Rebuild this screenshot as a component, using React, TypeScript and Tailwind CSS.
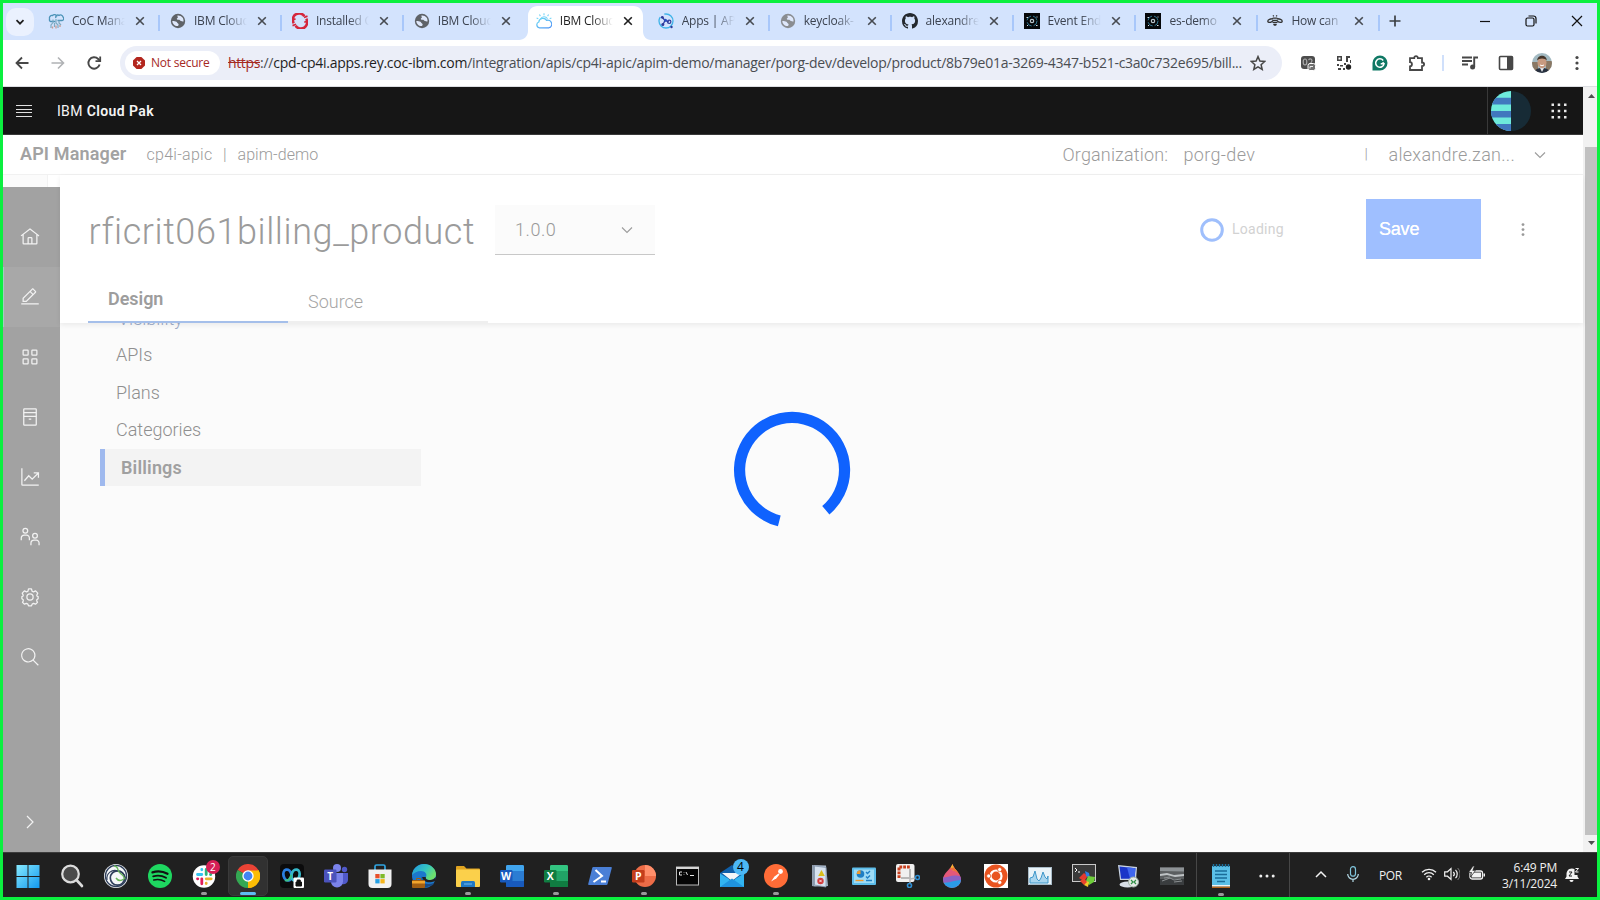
import type { ReactNode } from 'react';

type IconProps = { className?: string; box?: string; children: ReactNode };

function Svg({ className = 'size-4', box = '0 0 16 16', children }: IconProps) {
  return (
    <svg viewBox={box} className={`shrink-0 ${className}`} fill="none">
      {children}
    </svg>
  );
}

/* ---------- favicons ---------- */

function Globe({ color = '#5f6368' }: { color?: string }) {
  return (
    <Svg>
      <circle cx="8" cy="8" r="7.2" fill={color} />
      <path d="M2.300 8c1.800 0 3.200.2 4.200.8.800.5.6 1.300 1.500 1.600 1 .3.700 1.500 0 2.600C5 13.400 2.400 11 2.300 8Z" fill="#dfe8fb" />
      <path d="M7.200 2.700c2-.5 4 .3 5.300 1.900.9 1 .9 2.300 1.100 3.600-1 .6-1.700-.2-2.600-.2-.9 0-1-.9-1.800-1.200-.9-.4-2.200.1-2.400-.9-.1-.8 1.200-.9 1.100-1.700Z" fill="#dfe8fb" />
    </Svg>
  );
}

const favicons: Record<string, ReactNode> = {
  coc: (
    <Svg>
      <path d="M1.500 5.500a2.500 2.500 0 0 1 3-3 2.700 2.700 0 0 1 4.500 1M8 5a2 2 0 0 1 3-2.500 2.500 2.500 0 0 1 4 1.500 2 2 0 0 1-1 3.500H9.500M2 5.500a1.800 1.800 0 0 0 .5 3h5" stroke="#4c93b8" strokeWidth="1.300" />
      <path d="M5 6.500v3l-2 2.500v3M8 6v4l2 2v3M11 7.500v2.500l2 2M6.500 10v4" stroke="#7fabc2" strokeWidth="1.200" />
      <path d="M4.500 13.500v2M8 12.500v3M12 12v2" stroke="#c99a94" strokeWidth="1.300" />
    </Svg>
  ),
  globe: <Globe />,
  globeLight: <Globe color="#8a8d91" />,
  openshift: (
    <Svg>
      <path d="M1.800 10.200A6.300 6.300 0 0 1 12.400 3.300M14.200 5.800A6.300 6.300 0 0 1 3.600 12.700" stroke="#d5263c" strokeWidth="2.600" />
      <path d="m.3 7 3.200-1.100M12 4.500l3.500-1.400M.5 12.600l3.600-1.300M12.300 9.300l3.200-1.200" stroke="#d5263c" strokeWidth="1.700" />
    </Svg>
  ),
  cloud: (
    <Svg>
      <defs>
        <linearGradient id="cl" x1="0" y1="0" x2="1" y2="1">
          <stop stopColor="#6adcf4" />
          <stop offset="1" stopColor="#4b8ff5" />
        </linearGradient>
      </defs>
      <path d="M3.500 14.800a3 3 0 0 1-.7-5.800 4.200 4.200 0 0 1 7.800-1.600 3.800 3.800 0 0 1 2.400 7.400Z" stroke="url(#cl)" strokeWidth="1.200" />
      <path d="M8 .3v1.900M3.400 1.500l1 1.600M12.600 1.500l-1 1.600M.6 5l1.700.8M15.400 5l-1.700.8M4.500 6a4 4 0 0 1 7-.3" stroke="#78d5f7" strokeWidth="1.100" />
    </Svg>
  ),
  apic: (
    <Svg>
      <circle cx="8" cy="8" r="7" stroke="#3fb3e8" strokeWidth="1.300" strokeDasharray="26 5" />
      <path d="m4.500 4.500 2.500 3-2 4M7 7.500l4 1.500" stroke="#2d3a9a" strokeWidth="1.300" />
      <circle cx="4.300" cy="4.300" r="1.400" fill="#2d3a9a" />
      <circle cx="4.800" cy="11.400" r="1.500" fill="#2d3a9a" />
      <circle cx="7.500" cy="7.300" r="1.500" fill="#2a4fc0" />
      <circle cx="11.200" cy="8.800" r="1.700" stroke="#2d3a9a" strokeWidth="1.200" />
      <circle cx="13.500" cy="14" r="1.200" fill="#2d3a9a" />
    </Svg>
  ),
  github: (
    <Svg>
      <path fill="#24292f" d="M8 0c4.420 0 8 3.580 8 8a8.013 8.013 0 0 1-5.450 7.590c-.4.080-.55-.17-.55-.38 0-.27.010-1.130.010-2.200 0-.75-.25-1.230-.54-1.480 1.780-.2 3.650-.88 3.650-3.950 0-.88-.31-1.590-.82-2.150.080-.2.360-1.020-.080-2.120 0 0-.67-.22-2.200.82-.64-.18-1.320-.27-2-.27-.68 0-1.360.090-2 .27-1.530-1.030-2.200-.82-2.200-.82-.44 1.100-.16 1.920-.080 2.120-.51.56-.82 1.280-.82 2.150 0 3.060 1.860 3.750 3.640 3.950-.23.2-.44.550-.51 1.070-.46.210-1.610.550-2.330-.66-.15-.24-.6-.83-1.230-.82-.67.010-.27.380.010.530.340.190.730.900.820 1.130.160.450.680 1.310 2.690.940 0 .670.010 1.300.010 1.490 0 .210-.150.450-.550.380A7.995 7.995 0 0 1 0 8c0-4.420 3.580-8 8-8Z" />
    </Svg>
  ),
  events: (
    <Svg>
      <rect width="16" height="16" fill="#05070a" />
      <circle cx="8" cy="8" r="5" stroke="#2f7590" strokeWidth="1" strokeDasharray="6 2" />
      <circle cx="8" cy="8" r="1.700" stroke="#b8c4cc" strokeWidth="1.200" />
      <path d="M2.500 4.500h1.500M12.500 4h1M3 12.500h1M12 12.500h1.500" stroke="#d5dde2" />
    </Svg>
  ),
  bee: (
    <Svg>
      <path d="M6 5.800C3.500 5.600.8 6.500.8 8.200c0 1.800 3.600 1.600 5.200-.6M10 5.800c2.500-.2 5.200.7 5.200 2.400 0 1.800-3.600 1.600-5.200-.6" stroke="#333" strokeWidth="1.300" />
      <path d="M5.700 5.200h4.600M5.500 7.300h5M5.500 9.400h5M6.300 11.500h3.400M8 11v2M6.800 3.400 6 2.400M9.200 3.400l.8-1" stroke="#333" strokeWidth="1.300" />
    </Svg>
  ),
};

/* ---------- browser chrome ---------- */

const tabs = [
  { icon: 'coc', title: 'CoC Mana' },
  { icon: 'globe', title: 'IBM Cloud' },
  { icon: 'openshift', title: 'Installed C' },
  { icon: 'globe', title: 'IBM Cloud' },
  { icon: 'cloud', title: 'IBM Cloud', active: true },
  { icon: 'apic', title: 'Apps | API' },
  { icon: 'globeLight', title: 'keycloak-' },
  { icon: 'github', title: 'alexandre' },
  { icon: 'events', title: 'Event End' },
  { icon: 'events', title: 'es-demo' },
  { icon: 'bee', title: 'How can' },
];

function Cross({ color = '#3c4043' }: { color?: string }) {
  return (
    <Svg className="size-2.5" box="0 0 10 10">
      <path d="m1.200 1.200 7.600 7.600M8.800 1.200 1.200 8.800" stroke={color} strokeWidth="1.600" />
    </Svg>
  );
}

function TabStrip() {
  return (
    <div className="flex h-[37px] shrink-0 bg-[#d3e3fd] font-['Open_Sans',sans-serif]">
      <div className="flex w-[35.500px] shrink-0 items-center pl-[3px]">
        <div className="flex size-7 items-center justify-center rounded-[10px] bg-[#eaf1fe]">
          <Svg className="size-2.5" box="0 0 10 10">
            <path d="M1.500 3.200 5 6.700l3.500-3.500" stroke="#1f1f1f" strokeWidth="1.700" />
          </Svg>
        </div>
      </div>
      {tabs.map((t, i) => (
        <div key={i} className={`relative flex w-[121.950px] shrink-0 pt-[3px] ${t.active ? 'z-10' : ''}`}>
          {t.active && (
            <svg viewBox="0 0 132 34" className="absolute top-[3px] -left-[7px] h-[34px] w-[132px]">
              <path d="M0 34c5 0 9-4 9-9V10C9 4 13 0 19 0h95c6 0 10 4 10 10v15c0 5 3 9 8 9Z" fill="#fff" />
            </svg>
          )}
          <div className="relative flex w-full items-center pb-[5px] pl-[9.500px]">
            {favicons[t.icon]}
            <span
              className={`ml-2 w-[54px] text-[12px] leading-5 tracking-[-0.2px] whitespace-nowrap [mask-image:linear-gradient(90deg,#000_60%,transparent_98%)] ${t.active ? 'text-[#1f1f1f]' : 'text-[#3c4350]'}`}
            >
              {t.title}
            </span>
            <span className="ml-[9px] flex">
              <Cross color={t.active ? '#1f1f1f' : '#474b52'} />
            </span>
          </div>
          {i !== 3 && !t.active && <div className="mt-[9px] h-4 w-0.5 shrink-0 bg-[#a8c7fa]" />}
          {(i === 3 || t.active) && <div className="w-0.5 shrink-0" />}
        </div>
      ))}
      <div className="flex flex-1 items-center pb-0.5 pl-[9px]">
        <Svg className="size-3" box="0 0 12 12">
          <path d="M6 .5v11M.5 6h11" stroke="#3c4043" strokeWidth="1.700" />
        </Svg>
        <div className="ml-auto flex items-center gap-[34px] pr-[14px]">
          <Svg className="size-3" box="0 0 12 12">
            <path d="M1 6.500h10" stroke="#111" strokeWidth="1.200" />
          </Svg>
          <Svg className="size-3" box="0 0 12 12">
            <rect x="1" y="3" width="8" height="8" rx="1.500" stroke="#111" strokeWidth="1.200" />
            <path d="M3.500 1h5A2.500 2.500 0 0 1 11 3.500v5" stroke="#111" strokeWidth="1.200" />
          </Svg>
          <Svg className="size-3" box="0 0 12 12">
            <path d="m1 1 10 10M11 1 1 11" stroke="#111" strokeWidth="1.200" />
          </Svg>
        </div>
      </div>
    </div>
  );
}

function Toolbar() {
  return (
    <div className="flex h-[47px] shrink-0 items-center border-b border-[#dcdee2] bg-white pb-px font-['Open_Sans',sans-serif]">
      <div className="flex w-[117px] shrink-0 items-center gap-5 pl-[11px]">
        <Svg>
          <path d="M14.500 8H2.500M8 2.500 2.500 8 8 13.500" stroke="#474747" strokeWidth="1.800" />
        </Svg>
        <Svg>
          <path d="M1.500 8h12M8 2.500 13.500 8 8 13.500" stroke="#b0b2b5" strokeWidth="1.600" />
        </Svg>
        <Svg>
          <path d="M13.600 9.500A5.700 5.700 0 1 1 12.200 4L14 5.800" stroke="#474747" strokeWidth="1.900" />
          <path d="M14.200 1.500v4.700H9.500" stroke="#474747" strokeWidth="1.800" />
        </Svg>
      </div>
      <div className="flex h-[34px] w-[1162px] shrink-0 items-center rounded-full bg-[#ebeef8] pl-[5px]">
        <div className="flex h-6 w-[95px] shrink-0 items-center gap-[6px] rounded-full bg-white pl-[8px]">
          <Svg className="size-3" box="0 0 12 12">
            <path d="M3.600 0h4.800L12 3.600v4.800L8.400 12H3.600L0 8.400V3.600Z" fill="#b3261e" />
            <path d="m4 4 4 4M8 4 4 8" stroke="#fff" strokeWidth="1.300" />
          </Svg>
          <span className="text-[12px] leading-5 tracking-[-0.230px] whitespace-nowrap text-[#a5291f]">Not secure</span>
        </div>
        <div className="ml-2 flex w-[1018px] shrink-0 text-[14px] leading-6 whitespace-nowrap text-[#4a4d52]">
          <span className="tracking-[-0.360px] text-[#a5291f] line-through">https</span>
          <span className="tracking-[-0.260px]">
            ://<span className="text-[#1f1f1f]">cpd-cp4i.apps.rey.coc-ibm.com</span>
            /integration/apis/cp4i-apic/apim-demo/manager/porg-dev/develop/product/8b79e01a-3269-4347-b521-c3a0c732e695/bill...
          </span>
        </div>
        <Svg className="ml-[4px] size-4">
          <path d="m8 1.600 1.900 4.500 4.800.4-3.600 3.200 1.100 4.700L8 11.900l-4.200 2.500 1.100-4.700L1.300 6.500l4.800-.4Z" stroke="#474747" strokeWidth="1.500" />
        </Svg>
      </div>
      <div className="flex flex-1 items-center pl-[18px]">
        <Svg>
          <rect x="1" y="1" width="14" height="13" rx="3" fill="#4d4d4d" />
          <ellipse cx="5" cy="7" rx="1.800" ry="3" stroke="#a8a8a8" strokeWidth="1.200" />
          <path d="M8.500 5c2-2.200 4.500-.2 3 2L10 9" stroke="#a8a8a8" strokeWidth="1.200" />
          <rect x="8" y="8.500" width="7.500" height="7" rx="2" fill="#6f6f6f" stroke="#fff" />
          <path d="M10 13.500v-2h3" stroke="#eee" />
        </Svg>
        <Svg className="ml-5 size-4">
          <path d="M1 1h5v5H1zM10 1h4v2h-2v4h-2zM1 9h2v2H1zM4 10h3v1.500H4zM2 13h3v2H2zM8 8h2v2H8zM14 5h1v3h-1zM7 13h2v2H7z" fill="#444" />
          <path d="M2.500 2.500h2v2h-2z" fill="#fff" />
          <circle cx="12.500" cy="12" r="2.700" fill="#222" />
        </Svg>
        <Svg className="ml-5 size-4">
          <path d="M.5 8A7.500 7.500 0 1 1 8 15.500H.5Z" fill="#0f7864" />
          <path d="M11.200 5.500A4.200 4.200 0 1 0 12 8.800H8.700M12 8.800l-1.400-1.500" stroke="#fff" strokeWidth="1.500" />
        </Svg>
        <Svg className="ml-5 size-[18px]" box="0 0 18 18">
          <path d="M2 4.200h4.200C6 1.300 10 1.300 9.900 4.200H14v4.300c2.800 0 2.800 3.500 0 3.600V16H2v-3.700c2.600-.2 2.600-4 0-4.100Z" stroke="#474747" strokeWidth="1.800" />
        </Svg>
        <div className="ml-4 h-4 w-0.5 bg-[#d0e0fb]" />
        <Svg className="ml-[17px] size-[18px]" box="0 0 18 18">
          <path d="M1 3.500h10M1 7h10M1 10.500h6" stroke="#474747" strokeWidth="1.900" />
          <path d="M13.200 13V3.500H17" stroke="#474747" strokeWidth="1.900" />
          <circle cx="11.600" cy="13" r="2.500" fill="#474747" />
        </Svg>
        <Svg className="ml-[19px] size-4">
          <rect x="1.500" y="1.500" width="13" height="13" rx="1" stroke="#474747" strokeWidth="1.600" />
          <path d="M9 1.500h5.500v13H9z" fill="#474747" />
        </Svg>
        <Svg className="ml-[18px] size-5" box="0 0 20 20">
          <defs>
            <clipPath id="face">
              <circle cx="10" cy="10" r="10" />
            </clipPath>
          </defs>
          <g clipPath="url(#face)">
            <rect width="20" height="20" fill="#a3bac2" />
            <path d="M0 9h6v11H0zM14 8h6v12h-6z" fill="#8a7864" />
            <path d="M2 20c1-4 4-5 8-5s7 1 8 5Z" fill="#28303f" />
            <path d="m7.500 14 2.500 5 2.500-5Z" fill="#e4e6ea" />
            <ellipse cx="10" cy="9.500" rx="4.500" ry="5.800" fill="#c89a80" />
            <path d="M5.200 7.500c-.2-6.500 9.800-6.500 9.600 0-1.500-2.800-8-2.800-9.600 0Z" fill="#44352a" />
            <path d="M8 12q2 1.500 4 0" stroke="#fff" />
          </g>
        </Svg>
        <Svg className="ml-[17px] size-4">
          <circle cx="8" cy="2.500" r="1.600" fill="#474747" />
          <circle cx="8" cy="8" r="1.600" fill="#474747" />
          <circle cx="8" cy="13.500" r="1.600" fill="#474747" />
        </Svg>
      </div>
    </div>
  );
}

/* ---------- application ---------- */

function AppHeader() {
  return (
    <header className="flex h-12 shrink-0 items-center border-b border-[#393939] bg-[#161616] pl-[13px] font-[Roboto,sans-serif] text-[14px] text-[#f4f4f4]">
      <Svg className="size-4">
        <path d="M0 2.500h16M0 6.500h16M0 9.500h16M0 13.500h16" stroke="#e0e0e0" strokeWidth="1.200" />
      </Svg>
      <span className="mt-0.5 ml-[25px] tracking-[0.300px]">IBM</span>
      <span className="mt-0.5 ml-[4px] font-semibold tracking-[0.400px]">Cloud Pak</span>
      <div className="ml-auto h-full w-px bg-[#393939]" />
      <Svg className="ml-[3px] size-10" box="0 0 40 40">
        <defs>
          <clipPath id="av">
            <circle cx="20" cy="20" r="20" />
          </clipPath>
        </defs>
        <g clipPath="url(#av)">
          <rect width="40" height="40" fill="#172b36" />
          <rect width="20" height="40" fill="#6eeadb" />
          <path d="M0 6.800h20v6.600H0zM0 20h20v6.500H0zM0 33h20v7H0z" fill="#4178be" />
        </g>
      </Svg>
      <Svg className="mr-4 ml-[20px] size-4">
        <path d="M.5.5h2.500v2.500H.5zM6.700.5h2.500v2.500H6.700zM13 .5h2.500v2.500H13zM.5 6.700h2.500v2.500H.5zM6.700 6.700h2.500v2.500H6.700zM13 6.700h2.500v2.500H13zM.5 13h2.500v2.500H.5zM6.700 13h2.500v2.500H6.700zM13 13h2.500v2.500H13z" fill="#e8e8e8" />
      </Svg>
    </header>
  );
}

function Chevron() {
  return (
    <Svg className="size-3" box="0 0 12 12">
      <path d="M1 3.500 6 8.500l5-5" stroke="#9c9c9c" strokeWidth="1.100" />
    </Svg>
  );
}

function SubHeader() {
  return (
    <div className="flex h-10 shrink-0 items-center border-b border-[#f1f1f1] bg-white pl-[17px] text-[18px] font-light whitespace-nowrap text-[#9b9b9b]">
      <span className="w-[126.500px] pb-0.5 font-semibold tracking-[0.150px] text-[#a2a2a2]">API Manager</span>
      <span className="w-[76.500px] text-[16px] tracking-[0.280px]">cp4i-apic</span>
      <span className="w-[14.500px] text-[16px]">|</span>
      <span className="text-[16px] tracking-[0.080px]">apim-demo</span>
      <span className="ml-auto w-[121px] tracking-[0.150px]">Organization:</span>
      <span className="w-[181px] tracking-[0.350px]">porg-dev</span>
      <span className="w-[24px] text-[15px]">|</span>
      <span className="w-[145.500px] tracking-[0.280px]">alexandre.zan...</span>
      <span className="flex w-[49px]">
        <Chevron />
      </span>
    </div>
  );
}

const carbon: Record<string, ReactNode> = {
  home: <path d="M16.612 2.214a1.010 1.010 0 0 0-1.243 0L1 13.419l1.243 1.572L4 13.621V26a2.004 2.004 0 0 0 2 2h20a2.004 2.004 0 0 0 2-2V13.630L29.757 15 31 13.428ZM18 26h-4v-8h4Zm2 0v-8a2.002 2.002 0 0 0-2-2h-4a2.002 2.002 0 0 0-2 2v8H6V12.062l10-7.790 10 7.800V26Z" />,
  edit: <path d="M2 26h28v2H2zM25.400 9c.8-.8.8-2 0-2.800l-3.600-3.600c-.8-.8-2-.8-2.800 0l-15 15V24h6.400ZM20.400 4 24 7.600l-3 3L17.400 7ZM6 22v-3.600l10-10 3.600 3.600-10 10Z" />,
  apps: <path d="M12 4H6a2 2 0 0 0-2 2v6a2 2 0 0 0 2 2h6a2 2 0 0 0 2-2V6a2 2 0 0 0-2-2Zm0 8H6V6h6ZM26 4h-6a2 2 0 0 0-2 2v6a2 2 0 0 0 2 2h6a2 2 0 0 0 2-2V6a2 2 0 0 0-2-2Zm0 8h-6V6h6ZM12 18H6a2 2 0 0 0-2 2v6a2 2 0 0 0 2 2h6a2 2 0 0 0 2-2v-6a2 2 0 0 0-2-2Zm0 8H6v-6h6ZM26 18h-6a2 2 0 0 0-2 2v6a2 2 0 0 0 2 2h6a2 2 0 0 0 2-2v-6a2 2 0 0 0-2-2Zm0 8h-6v-6h6Z" />,
  catalog: (
    <g fill="none" stroke="currentColor" strokeWidth="2">
      <rect x="6" y="3" width="20" height="26" rx="1" />
      <path d="M6 9h20M6 15h20M14 19.500h4" />
    </g>
  ),
  chart: (
    <g fill="none" stroke="currentColor" strokeWidth="2">
      <path d="M3 2v26a1 1 0 0 0 1 1h26" />
      <path d="m7 22 7-8 5.500 5.500L29 10M22 9.500h7.500V17" />
    </g>
  ),
  users: (
    <g fill="none" stroke="currentColor" strokeWidth="2">
      <circle cx="8.500" cy="6" r="3.800" />
      <path d="M2 21v-3a5 5 0 0 1 5-5h3.500a4.500 4.500 0 0 1 4.500 5v3" />
      <circle cx="24" cy="14" r="3.800" />
      <path d="M17.500 29v-3a5 5 0 0 1 5-5H26a4.500 4.500 0 0 1 4.500 5v3" />
    </g>
  ),
  settings: (
    <g fill="none" stroke="currentColor" strokeWidth="2">
      <circle cx="16" cy="16" r="5" />
      <path
        d="M13.600 3h4.800l.8 3.600 2.400 1.300 3.400-1.600 3.400 3.500-1.600 3.400.6 1.600 1.600.6v3.400l-2.200 1.500v2l1.200 2.300-3.200 2.900-3-1.300-2.400 1.200-1 2.600h-4.800l-1-2.600-2.400-1.200-3 1.300L4 24.600l1.200-2.300v-2L3 18.800v-3.400l1.600-.6.6-1.600-1.600-3.400L7 6.300l3.400 1.600 2.400-1.300Z"
        strokeLinejoin="round"
      />
    </g>
  ),
  search: <path d="m30 28.590-7.900-7.900a11.500 11.500 0 1 0-1.400 1.400l7.900 7.900ZM3.500 13.200A9.700 9.700 0 1 1 13.200 23 9.700 9.700 0 0 1 3.500 13.200Z" />,
};

const navItems = ['home', 'edit', 'apps', 'catalog', 'chart', 'users', 'settings', 'search'];

function SideNav() {
  return (
    <div className="flex w-[57px] shrink-0 flex-col bg-white">
      <div className="h-3 w-[45px] shrink-0 border-r border-[#f2f2f2] bg-[#fbfbfb]" />
      <nav className="flex flex-1 flex-col bg-[#a2a2a2] pt-5 text-[#f2f2f2]">
        {navItems.map((n) => (
          <div
            key={n}
            className={`flex h-[60px] shrink-0 items-center justify-center border-l pr-[4px] ${n === 'edit' ? 'border-[#9fd0c0] bg-[#a8a8a8]' : 'border-transparent'}`}
          >
            <svg viewBox="0 0 32 32" className="size-5" fill="currentColor">
              {carbon[n]}
            </svg>
          </div>
        ))}
        <div className="mt-auto flex h-[60px] items-center justify-center pr-[3px]">
          <Svg className="size-3.5" box="0 0 14 14">
            <path d="m4 1 6 6-6 6" stroke="#f2f2f2" strokeWidth="1.200" />
          </Svg>
        </div>
      </nav>
    </div>
  );
}

const sections = ['APIs', 'Plans', 'Categories'];

function Product() {
  return (
    <main className="flex min-w-0 flex-1 flex-col bg-[#fbfbfb]">
      <div className="z-10 flex h-[148px] shrink-0 flex-col bg-white shadow-[0_2px_5px_rgba(0,0,0,0.07)]">
        <div className="flex h-[109px] shrink-0 items-center pl-[28.500px]">
          <h1 className="mt-1 w-[406.500px] text-[36px] leading-[48px] font-light tracking-[0.580px] whitespace-nowrap text-[#9b9b9b]">
            rficrit061billing_product
          </h1>
          <div className="mt-px flex h-[50px] w-40 items-center justify-between border-b border-[#c8c8c8] bg-[#fbfbfb] pr-[22px] pl-5">
            <span className="text-[18px] font-light tracking-[0.550px] text-[#999]">1.0.0</span>
            <Chevron />
          </div>
          <div className="ml-auto flex w-[166px] items-center gap-2 pr-1">
            <Svg className="size-6" box="0 0 24 24">
              <circle cx="12" cy="12" r="10.300" stroke="#9fbffc" strokeWidth="3" />
            </Svg>
            <span className="text-[14px] tracking-[0.250px] text-[#d2d2d2]">Loading</span>
          </div>
          <button className="-mt-px flex h-[60px] w-[115px] items-center bg-[#9fbfff] pl-[13px] font-['Liberation_Sans',sans-serif] text-[18px] tracking-[-0.200px] text-white [text-shadow:0_0_0.5px_#fff]">
            Save
          </button>
          <Svg className="mr-[52px] ml-[34px] size-4">
            <circle cx="8" cy="2.600" r="1.400" fill="#999" />
            <circle cx="8" cy="7.600" r="1.400" fill="#999" />
            <circle cx="8" cy="12.600" r="1.400" fill="#999" />
          </Svg>
        </div>
        <div className="flex text-[18px]">
          <div className="ml-[28px] flex h-[39px] w-[200px] items-center border-b-2 border-[#a5bfea] pb-[8px] pl-5 font-semibold tracking-[-0.050px] text-[#9d9d9d]">
            Design
          </div>
          <div className="flex h-[39px] w-[200px] items-center border-b-2 border-[#efefef] pb-[2px] pl-5 font-light text-[#a5a5a5]">Source</div>
        </div>
      </div>
      <div className="relative flex flex-1">
        <div className="w-[361px] pl-10 text-[18px] font-light">
          <div className="h-[13px] overflow-hidden pl-[18px] leading-[18px] text-[#9dabc8]">
            <div className="-mt-[13px]">Visibility</div>
          </div>
          {sections.map((s) => (
            <div key={s} className="flex h-[37.500px] items-center pl-4 text-[#8f8f8f]">
              {s}
            </div>
          ))}
          <div className="flex h-[37px] items-center border-l-[5px] border-[#9fb9ee] bg-[#f3f3f3] pl-4 font-semibold tracking-[0.150px] text-[#a0a0a0]">
            Billings
          </div>
        </div>
        <svg viewBox="0 0 120 120" className="absolute top-[86.500px] left-[672px] size-[120px]" fill="none">
          <path d="M93.800 100.200A52.500 52.500 0 1 0 47.300 110.900" stroke="#0f62fe" strokeWidth="11.200" />
        </svg>
      </div>
    </main>
  );
}

function Scrollbar() {
  return (
    <div className="flex w-[14px] shrink-0 flex-col items-center bg-[#f1f1f1] pl-0.5">
      <div className="flex h-[60px] w-full items-start justify-center pt-[7px]">
        <Svg className="h-1 w-[7px]" box="0 0 7 4">
          <path d="M0 4 3.500 0 7 4Z" fill="#505050" />
        </Svg>
      </div>
      <div className="w-full flex-1 bg-[#c1c1c1]" />
      <div className="flex h-[17px] w-full items-end justify-center pb-[7px]">
        <Svg className="h-1 w-[7px]" box="0 0 7 4">
          <path d="M0 0 3.500 4 7 0Z" fill="#505050" />
        </Svg>
      </div>
    </div>
  );
}

/* ---------- taskbar ---------- */

function OfficeIcon({ letter, dark, mid, light, round }: { letter: string; dark: string; mid: string; light: string; round?: boolean }) {
  return (
    <Svg className="size-6" box="0 0 24 24">
      {round ? (
        <>
          <circle cx="13" cy="12" r="11" fill={mid} />
          <path d="M13 1a11 11 0 0 1 11 11H13Z" fill={light} />
        </>
      ) : (
        <>
          <rect x="6" y="1" width="18" height="22" rx="1.500" fill={mid} />
          <path d="M6 2.500A1.500 1.500 0 0 1 7.500 1h15A1.500 1.500 0 0 1 24 2.500V7H6Z" fill={light} />
          <path d="M6 17h18v4.500a1.500 1.500 0 0 1-1.500 1.500h-15A1.500 1.500 0 0 1 6 21.500Z" fill={dark} />
        </>
      )}
      <rect y="6" width="12.500" height="12.500" rx="1.200" fill={dark} />
      <text x="6.200" y="16" textAnchor="middle" fontFamily="Open Sans" fontWeight="700" fontSize="10.500" fill="#fff">
        {letter}
      </text>
    </Svg>
  );
}

const big = { className: 'size-6', box: '0 0 24 24' };

const apps: { id: string; icon: ReactNode; dot?: boolean; active?: boolean; badge?: string; badgeBlue?: boolean }[] = [
  {
    id: 'start',
    icon: (
      <Svg {...big}>
        <defs>
          <linearGradient id="win" x1="0" y1="0" x2="1" y2="1">
            <stop stopColor="#86eaff" />
            <stop offset="1" stopColor="#1298ee" />
          </linearGradient>
        </defs>
        <path d="M.5 1h11v11H.5zM12.500 1h11v11h-11zM.5 13h11v11H.5zM12.500 13h11v11h-11z" fill="url(#win)" />
      </Svg>
    ),
  },
  {
    id: 'search',
    icon: (
      <Svg {...big}>
        <circle cx="10.500" cy="10" r="8.300" fill="#4a4a4a" stroke="#dcdcdc" strokeWidth="2.200" />
        <path d="m16.500 16 5.500 6" stroke="#dcdcdc" strokeWidth="2.600" strokeLinecap="round" />
      </Svg>
    ),
  },
  {
    id: 'eclipse',
    icon: (
      <Svg {...big}>
        <circle cx="12" cy="12" r="12" fill="#f5f7f8" />
        <circle cx="12" cy="12" r="10.600" stroke="#31405c" strokeWidth="1.300" />
        <circle cx="13.500" cy="14" r="7.200" stroke="#31405c" strokeWidth="1.700" />
        <path d="M3 16C2 9 8 5 14 7s8 6 7 10" stroke="#31405c" strokeWidth="1.200" />
        <path d="M10 2c5 0 3 5 6 7s4 3 5 6M12 14c2 3 5 3 8 1" stroke="#68b55a" strokeWidth="1.400" />
      </Svg>
    ),
  },
  {
    id: 'spotify',
    icon: (
      <Svg {...big}>
        <circle cx="12" cy="12" r="12" fill="#1ed760" />
        <path d="M4.500 8.300c5-1.500 10.500-1 15 1.500" stroke="#121212" strokeWidth="2.300" strokeLinecap="round" />
        <path d="M5.200 12.300c4.300-1.200 9-.7 12.800 1.500" stroke="#121212" strokeWidth="1.900" strokeLinecap="round" />
        <path d="M5.800 16c3.600-.9 7.500-.5 10.800 1.400" stroke="#121212" strokeWidth="1.600" strokeLinecap="round" />
      </Svg>
    ),
  },
  {
    id: 'slack',
    dot: true,
    badge: '2',
    icon: (
      <Svg {...big}>
        <circle cx="12" cy="12.500" r="11.200" fill="#fff" />
        <g strokeLinecap="round" strokeWidth="2.800">
          <path d="M9.800 10.500H5.500M9.800 5.500v.3" stroke="#36c5f0" />
          <path d="M14.200 5.500v5M18.500 10.500h.3" stroke="#2eb67d" />
          <path d="M14.200 14.800h5M14.200 19.500v-.3" stroke="#ecb22e" />
          <path d="M9.800 14.800v5M5.500 14.800h.3" stroke="#e01e5a" />
        </g>
      </Svg>
    ),
  },
  {
    id: 'chrome',
    active: true,
    icon: (
      <Svg {...big}>
        <path d="M12 12 1.600 6A12 12 0 0 1 22.400 6Z" fill="#ea4335" />
        <path d="M12 12 22.400 6A12 12 0 0 1 12 24Z" fill="#fbbc05" />
        <path d="M12 12v12A12 12 0 0 1 1.600 6Z" fill="#34a853" />
        <path d="M12 6.500h10.700A12 12 0 0 1 12 24l5-9Z" fill="#fbbc05" />
        <circle cx="12" cy="12" r="5.700" fill="#fff" />
        <circle cx="12" cy="12" r="4.400" fill="#4285f4" />
      </Svg>
    ),
  },
  {
    id: 'webex',
    icon: (
      <Svg {...big}>
        <rect width="24" height="24" rx="4" fill="#0b0b0c" />
        <ellipse cx="7.500" cy="11" rx="4" ry="5.500" stroke="#2a7fe0" strokeWidth="2.800" transform="rotate(-15 7.500 11)" />
        <ellipse cx="15.500" cy="11" rx="4" ry="5.500" stroke="#36b8c9" strokeWidth="2.800" transform="rotate(15 15.500 11)" />
        <path d="M5 16c3 1.500 5-1 6.500-5" stroke="#3cc08a" strokeWidth="2.200" />
        <rect x="13.500" y="13.500" width="10.500" height="10.500" rx="1" fill="#fff" />
        <path d="M16 18h5.500v4H16zM17.200 18v-2h3v2" fill="#111" stroke="#111" />
      </Svg>
    ),
  },
  {
    id: 'teams',
    icon: (
      <Svg {...big}>
        <circle cx="20.500" cy="5.500" r="2.700" fill="#5059c9" />
        <path d="M16 9h8v7a4.500 4.500 0 0 1-6 4Z" fill="#5059c9" />
        <circle cx="13" cy="4" r="4" fill="#7b83eb" />
        <path d="M7 9h12v8.500a6 6 0 0 1-12 0Z" fill="#7b83eb" />
        <rect y="5.500" width="12.500" height="13" rx="1.200" fill="#4b53bc" />
        <text x="6.200" y="15.700" textAnchor="middle" fontFamily="Open Sans" fontWeight="700" fontSize="10" fill="#fff">
          T
        </text>
      </Svg>
    ),
  },
  {
    id: 'store',
    icon: (
      <Svg {...big}>
        <path d="M7 7V2.500A1.500 1.500 0 0 1 8.500 1h7A1.500 1.500 0 0 1 17 2.500V7" stroke="#2fa4e0" strokeWidth="1.700" />
        <path d="M.5 5.500h23V20a4 4 0 0 1-4 4h-15a4 4 0 0 1-4-4Z" fill="#f1f1f1" />
        <path d="M7.300 10h4.300v4.300H7.300z" fill="#e8502a" />
        <path d="M12.400 10h4.300v4.300h-4.300z" fill="#7fba2a" />
        <path d="M7.300 15.100h4.300v4.300H7.300z" fill="#25a0e4" />
        <path d="M12.400 15.100h4.300v4.300h-4.300z" fill="#f5b51c" />
      </Svg>
    ),
  },
  {
    id: 'edge',
    icon: (
      <Svg {...big}>
        <defs>
          <linearGradient id="edge" x1="0" y1="0" x2="1" y2=".5">
            <stop stopColor="#2196e0" />
            <stop offset=".6" stopColor="#35c6c0" />
            <stop offset="1" stopColor="#6ee06b" />
          </linearGradient>
        </defs>
        <circle cx="12" cy="12" r="12" fill="#1c78cc" />
        <path d="M0 11C1 4 6 0 12 0c7 0 12 5 12 10 0 4-3 6-6 6-3.500 0-5-1.500-4-3 1.500-3-1-6-5-6-4 0-7 2-9 4Z" fill="url(#edge)" />
        <path d="M14 13c-1 1.500.5 3 4 3 2.500 0 4.500-1 5.500-3l.5 4-4 1c-5 1-9-1-10-5Z" fill="#202020" />
        <path d="M10 12c-2 6 3 10 12 7l-1 2-9 3Z" fill="#184a86" />
        <rect y="16" width="13" height="8" rx="1" fill="#a35f12" />
        <path d="M0 17h13v2.500H0z" fill="#f2a52c" />
        <path d="M4.500 16v-1.500h4V16" stroke="#a35f12" />
      </Svg>
    ),
  },
  {
    id: 'explorer',
    dot: true,
    icon: (
      <Svg {...big}>
        <path d="M0 3a1 1 0 0 1 1-1h7l2.500 2.500H23a1 1 0 0 1 1 1V10H0Z" fill="#e0a320" />
        <rect y="5.500" width="24" height="17.500" rx="1" fill="#fbd04b" />
        <path d="M5 23v-4.500A1.500 1.500 0 0 1 6.500 17h11a1.500 1.500 0 0 1 1.500 1.500V23Z" fill="#1f78c4" />
        <path d="M8 20h8" stroke="#65b1ea" strokeWidth="1.200" />
      </Svg>
    ),
  },
  { id: 'word', icon: <OfficeIcon letter="W" dark="#185abd" mid="#2b7cd3" light="#41a5ee" /> },
  { id: 'excel', dot: true, icon: <OfficeIcon letter="X" dark="#107c41" mid="#21a366" light="#33c481" /> },
  {
    id: 'powershell',
    icon: (
      <Svg {...big}>
        <path d="M5.300 3H23a.8.8 0 0 1 .8 1L19.500 20.200a1.200 1.200 0 0 1-1.200.8H1a.8.8 0 0 1-.8-1L4.300 3.800A1.200 1.200 0 0 1 5.300 3Z" fill="#4a7fd6" />
        <path d="m7.500 6 6.500 6-8.500 6M13 17.500h5" stroke="#fff" strokeWidth="2" />
      </Svg>
    ),
  },
  { id: 'powerpoint', dot: true, icon: <OfficeIcon round letter="P" dark="#c43e1c" mid="#ed6c47" light="#ff8f6b" /> },
  {
    id: 'terminal',
    icon: (
      <Svg {...big}>
        <rect x=".5" y="3" width="22" height="18" fill="#050505" stroke="#b9b9b9" />
        <path d="M0 4h23" stroke="#d6d6d6" strokeWidth="2" />
        <path d="M6 8H3.500v3H6M8 8.500v.5M8 10.500v.5M10 8l1.500 3M14 11.500h4" stroke="#e6e6e6" />
      </Svg>
    ),
  },
  {
    id: 'mail',
    badge: '4',
    badgeBlue: true,
    icon: (
      <Svg {...big}>
        <path d="M0 9 12 1l12 8v6H0Z" fill="#0f5fa8" />
        <path d="M2 9h20l-10 8Z" fill="#f3f6f8" />
        <path d="M0 9.500 12 17l12-7.500V23H0Z" fill="#32b4f0" />
        <path d="m0 23 12-8.500L24 23Z" fill="#1f93dd" />
      </Svg>
    ),
  },
  {
    id: 'postman',
    dot: true,
    icon: (
      <Svg {...big}>
        <circle cx="12" cy="12" r="12" fill="#ff6c37" />
        <path d="m7 17.500 3.500-5 4-3 1 1-3 3.800-5.500 3.200Z" fill="#fff" />
        <circle cx="16.500" cy="7.500" r="2.400" fill="#fff" />
      </Svg>
    ),
  },
  {
    id: 'reliability',
    icon: (
      <Svg {...big}>
        <path d="m4 1 14 .5L20 22l-13 .5L4 22Z" fill="#a9b7ca" />
        <path d="m6.500 2 11.500 1.500V23L6.500 21Z" fill="#d6e1ee" stroke="#8798ad" strokeWidth=".8" />
        <path d="M5.200 1.500v20.500" stroke="#6f7a8a" strokeWidth="2" strokeDasharray="1 1" />
        <path d="m13.500 6 3.300 6h-6.600Z" fill="#d9bd1c" />
        <circle cx="12.500" cy="17" r="3.200" fill="#d43a3a" />
        <path d="m11.300 15.800 2.400 2.400M13.700 15.800l-2.400 2.400" stroke="#fff" strokeWidth=".8" />
      </Svg>
    ),
  },
  {
    id: 'panel',
    icon: (
      <Svg {...big}>
        <rect y="3.500" width="24" height="17.500" rx="1" fill="#5dbdea" />
        <rect x="2" y="5.500" width="20" height="13.500" fill="#9fdcf6" />
        <circle cx="8.500" cy="10" r="3.800" fill="#1f7fc4" />
        <path d="M8.500 10V6.200A3.800 3.800 0 0 0 4.700 10Z" fill="#f09a2d" />
        <path d="M3.500 16.500h8" stroke="#f09a2d" strokeWidth="1.400" />
        <path d="M14 16.500h6M14 8l1.500 1.500L18 7M14 12.500l1.500 1.500L18 11.500" stroke="#1f7fc4" strokeWidth="1.400" />
      </Svg>
    ),
  },
  {
    id: 'snip',
    icon: (
      <Svg {...big}>
        <rect width="18.500" height="18" rx="2" fill="#f0f0f0" />
        <path d="M3 14V3h11" stroke="#c8401f" strokeWidth="3" strokeDasharray="2.800 1" />
        <path d="M14 5v10M5 14h9" stroke="#b8b8b8" strokeWidth="2" />
        <path d="m14 15 6-1M14 15v5" stroke="#b8b8b8" strokeWidth="1.500" />
        <circle cx="21.500" cy="13.500" r="2" stroke="#2f8fd3" strokeWidth="1.600" />
        <circle cx="13.500" cy="21.500" r="2" stroke="#2f8fd3" strokeWidth="1.600" />
      </Svg>
    ),
  },
  {
    id: 'paint',
    icon: (
      <Svg {...big}>
        <defs>
          <clipPath id="drop">
            <path d="M12.500 0C14 6 21 9 21 15.500a9 8.500 0 0 1-18 0C3 9 10.500 6 12.500 0Z" />
          </clipPath>
        </defs>
        <g clipPath="url(#drop)">
          <rect width="24" height="24" fill="#e4587a" />
          <path d="M9 0h6l6 9-9-3Z" fill="#f6b42c" />
          <path d="M8 5c4 0 9 3 13 7V8L15 3Z" fill="#f0703a" />
          <path d="M2 13c6 2 9-4 20 0v5c-8-1-12 2-20 0Z" fill="#8d62c4" />
          <path d="M2 18c6 2 12-2 20-2v8H2Z" fill="#2b9be8" />
        </g>
      </Svg>
    ),
  },
  {
    id: 'ubuntu',
    icon: (
      <Svg {...big}>
        <rect width="24" height="24" fill="#fff" />
        <circle cx="12" cy="12" r="11.500" fill="#e95420" />
        <circle cx="12" cy="12" r="5.500" stroke="#fff" strokeWidth="2.200" />
        <g fill="#fff" stroke="#e95420" strokeWidth=".8">
          <circle cx="4.700" cy="12" r="2.100" />
          <circle cx="15.700" cy="5.600" r="2.100" />
          <circle cx="15.700" cy="18.400" r="2.100" />
        </g>
      </Svg>
    ),
  },
  {
    id: 'perf',
    icon: (
      <Svg {...big}>
        <rect x=".5" y="3.500" width="23" height="17" fill="#e9f3f8" stroke="#a9bcc8" />
        <path d="M2 19v-5l3-1 2-6 2 8 2 2 2-3 2-6 2 5 2 2 1-3v7Z" fill="#a8d5ee" stroke="#3f97c9" />
      </Svg>
    ),
  },
  {
    id: 'devcmd',
    icon: (
      <Svg {...big}>
        <rect x=".5" y=".5" width="23" height="17" fill="#3a3a3a" stroke="#c9c9c9" />
        <path d="m3 4 2 2-2 2M6 8h2" stroke="#fff" />
        <path d="m7 14 5-5 4 3-4 5Z" fill="#e33a2e" />
        <path d="m13 7 4 2 1 5-4-2Z" fill="#2f7de0" />
        <path d="m16 12 7 1-1 5-5 3-3-4Z" fill="#6fce3a" />
        <path d="m14 17 3 1-1 5-4-2Z" fill="#f1c92a" />
        <path d="m8 17 4-3 3 4-3 3Z" fill="#e8452c" />
      </Svg>
    ),
  },
  {
    id: 'putty',
    icon: (
      <Svg {...big}>
        <path d="m2 1 19 2-1 13H4Z" fill="#c9d3e2" />
        <path d="m3.500 2.500 16 1.700-1 10.500H5Z" fill="#1a35c8" />
        <path d="m11 3.300 8.500.9-1 10.500H14Z" fill="#3f66ee" />
        <ellipse cx="11.500" cy="20.500" rx="8" ry="3" fill="#d8dee6" />
        <circle cx="17.500" cy="18" r="5" fill="#e5eae6" stroke="#9fb0a4" />
        <path d="m15 16 2 2-2 2M20 16l-2 2 2 2" stroke="#2f8f44" strokeWidth="1.200" />
      </Svg>
    ),
  },
  {
    id: 'photo',
    icon: (
      <Svg {...big}>
        <rect y="3.500" width="24" height="17" fill="#5b5e60" />
        <path d="M0 3.500h24v4L0 7Z" fill="#8d9295" />
        <path d="m0 10 7-1 7 2 10-1v2l-9 1-8-2-7 1Z" fill="#bfc3c5" />
        <path d="M0 15h24v5.500H0Z" fill="#3a3d3f" />
        <path d="m2 17 8-3 4 2 7-1M4 14l6-1M14 18l8-1" stroke="#8b8f91" />
      </Svg>
    ),
  },
];

const notepad = (
  <Svg {...big}>
    <path d="M3 2h18v22H3z" fill="#5bc0e8" />
    <path d="M3 21h18v1.500H3z" fill="#f1f1f1" />
    <path d="M3 22.500h18V24H3z" fill="#b5651d" />
    <path d="M4.500 0v3M7.500 0v3M10.500 0v3M13.500 0v3M16.500 0v3M19.500 0v3" stroke="#1c6f9c" strokeWidth="1.500" />
    <path d="M6 7h12M6 10.500h12M6 14h12M8 17.500h8" stroke="#1a6c99" strokeWidth="1.500" />
  </Svg>
);

function Taskbar() {
  return (
    <footer className="flex h-[45px] shrink-0 border-t border-[#3c3c3c] bg-[#202020] pl-[2.500px] font-['Open_Sans',sans-serif] text-[#f0f0f0]">
      {apps.map((a) => (
        <div key={a.id} className="flex w-11 shrink-0 justify-center">
          <div
            className={`relative mt-[3px] flex h-10 w-10 items-start justify-center pt-2 ${a.active ? 'rounded-[5px] border border-[#3a3a3a] bg-[#313131] pt-[7px]' : ''}`}
          >
            {a.icon}
            {a.dot && <div className="absolute bottom-px left-[17px] h-[3px] w-1.5 rounded-full bg-[#9a9a9a]" />}
            {a.active && <div className="absolute bottom-0 left-[11px] h-[3px] w-4 rounded-full bg-[#5fbdf2]" />}
            {a.badge && (
              <div
                className={`absolute flex items-center justify-center rounded-full ${a.badgeBlue ? 'top-[3px] right-[3px] size-[16px] bg-[#4cb8f5] text-[12px] leading-none text-black' : 'top-1 right-1 size-[13.500px] bg-[#d61f56] text-[10px] leading-none text-white'}`}
              >
                {a.badge}
              </div>
            )}
          </div>
        </div>
      ))}
      <div className="ml-[2.500px] w-px shrink-0 bg-[#474747]" />
      <div className="relative flex w-[48px] shrink-0 justify-center pt-[11px]">
        {notepad}
        <div className="absolute top-[40px] left-[21px] h-[3px] w-1.5 rounded-full bg-[#9a9a9a]" />
      </div>
      <div className="flex w-[44px] shrink-0 justify-center pt-[19px] pr-px">
        <Svg className="h-2 w-4" box="0 0 16 8">
          <circle cx="1.800" cy="4" r="1.500" fill="#eee" />
          <circle cx="8" cy="4" r="1.500" fill="#eee" />
          <circle cx="14.200" cy="4" r="1.500" fill="#eee" />
        </Svg>
      </div>
      <div className="w-px shrink-0 bg-[#474747]" />
      <div className="flex flex-1 items-center pb-0.5 pl-[25px]">
        <Svg className="size-3" box="0 0 12 12">
          <path d="m1 9 5-5 5 5" stroke="#f2f2f2" strokeWidth="1.500" />
        </Svg>
        <Svg className="ml-[18px] size-4">
          <rect x="5.500" y=".7" width="5" height="9.500" rx="2.500" stroke="#7fc4dc" strokeWidth="1.200" />
          <path d="M2.700 8a5.300 5.300 0 0 0 10.600 0M8 13.300V16" stroke="#b5dbe8" strokeWidth="1.200" />
        </Svg>
        <span className="mt-[3px] ml-[18px] w-[41.500px] text-[12px] tracking-[-0.450px]">POR</span>
        <Svg>
          <path d="M1 6.200a10 10 0 0 1 14 0M3.200 8.700a6.800 6.800 0 0 1 9.600 0M5.400 11.200a3.700 3.700 0 0 1 5.200 0" stroke="#f2f2f2" strokeWidth="1.300" />
          <circle cx="8" cy="13" r="1.300" fill="#f2f2f2" />
        </Svg>
        <Svg className="ml-[7px] size-4">
          <path d="M.7 5.800h2.800L7 2.600v10.800L3.500 10.200H.7Z" stroke="#f2f2f2" strokeWidth="1.200" />
          <path d="M9.300 5.800a3.200 3.200 0 0 1 0 4.400M11.500 3.800a6 6 0 0 1 0 8.400" stroke="#f2f2f2" strokeWidth="1.200" />
          <path d="M13.700 2a8.500 8.500 0 0 1 0 12" stroke="#777" />
        </Svg>
        <Svg className="ml-[8px] h-4 w-[17px]" box="0 0 17 16">
          <rect x="2" y="5" width="12.500" height="8" rx="2" stroke="#f2f2f2" strokeWidth="1.300" />
          <path d="M3.500 6.500h9.500v5H3.500zM15.500 7.500h1.500v3h-1.500z" fill="#f2f2f2" />
          <path d="M5 0 .5 6.500h3L2.500 11 7.500 4.500H4.800L6.500 0Z" fill="#f2f2f2" stroke="#202020" strokeWidth=".7" />
        </Svg>
        <div className="mt-1 ml-auto flex flex-col items-end text-[12px] leading-4 tracking-[-0.200px]">
          <span>6:49 PM</span>
          <span>3/11/2024</span>
        </div>
        <Svg className="mt-0.5 mr-[17px] ml-[7px] size-4">
          <path d="M1 12 2.500 9.500V6.500a5.500 5.500 0 0 1 8-4.500v6h3v1.500L15 12ZM5.500 13h4a2 2 0 0 1-4 0Z" fill="#f2f2f2" />
          <path d="M5 5h3L5 9h3" stroke="#202020" />
          <path d="M11.500 1.500h3l-3 3.500h3" stroke="#f2f2f2" />
        </Svg>
      </div>
    </footer>
  );
}

export default function App() {
  return (
    <div className="flex h-[900px] w-[1600px] flex-col overflow-hidden border-[3px] border-[#0bf03f] bg-white">
      <TabStrip />
      <Toolbar />
      <div className="flex h-[765px] shrink-0">
        <div className="flex w-[1580px] flex-col font-[Roboto,sans-serif]">
          <AppHeader />
          <SubHeader />
          <div className="flex min-h-0 flex-1 bg-[#fbfbfb]">
            <SideNav />
            <Product />
          </div>
        </div>
        <Scrollbar />
      </div>
      <Taskbar />
    </div>
  );
}
